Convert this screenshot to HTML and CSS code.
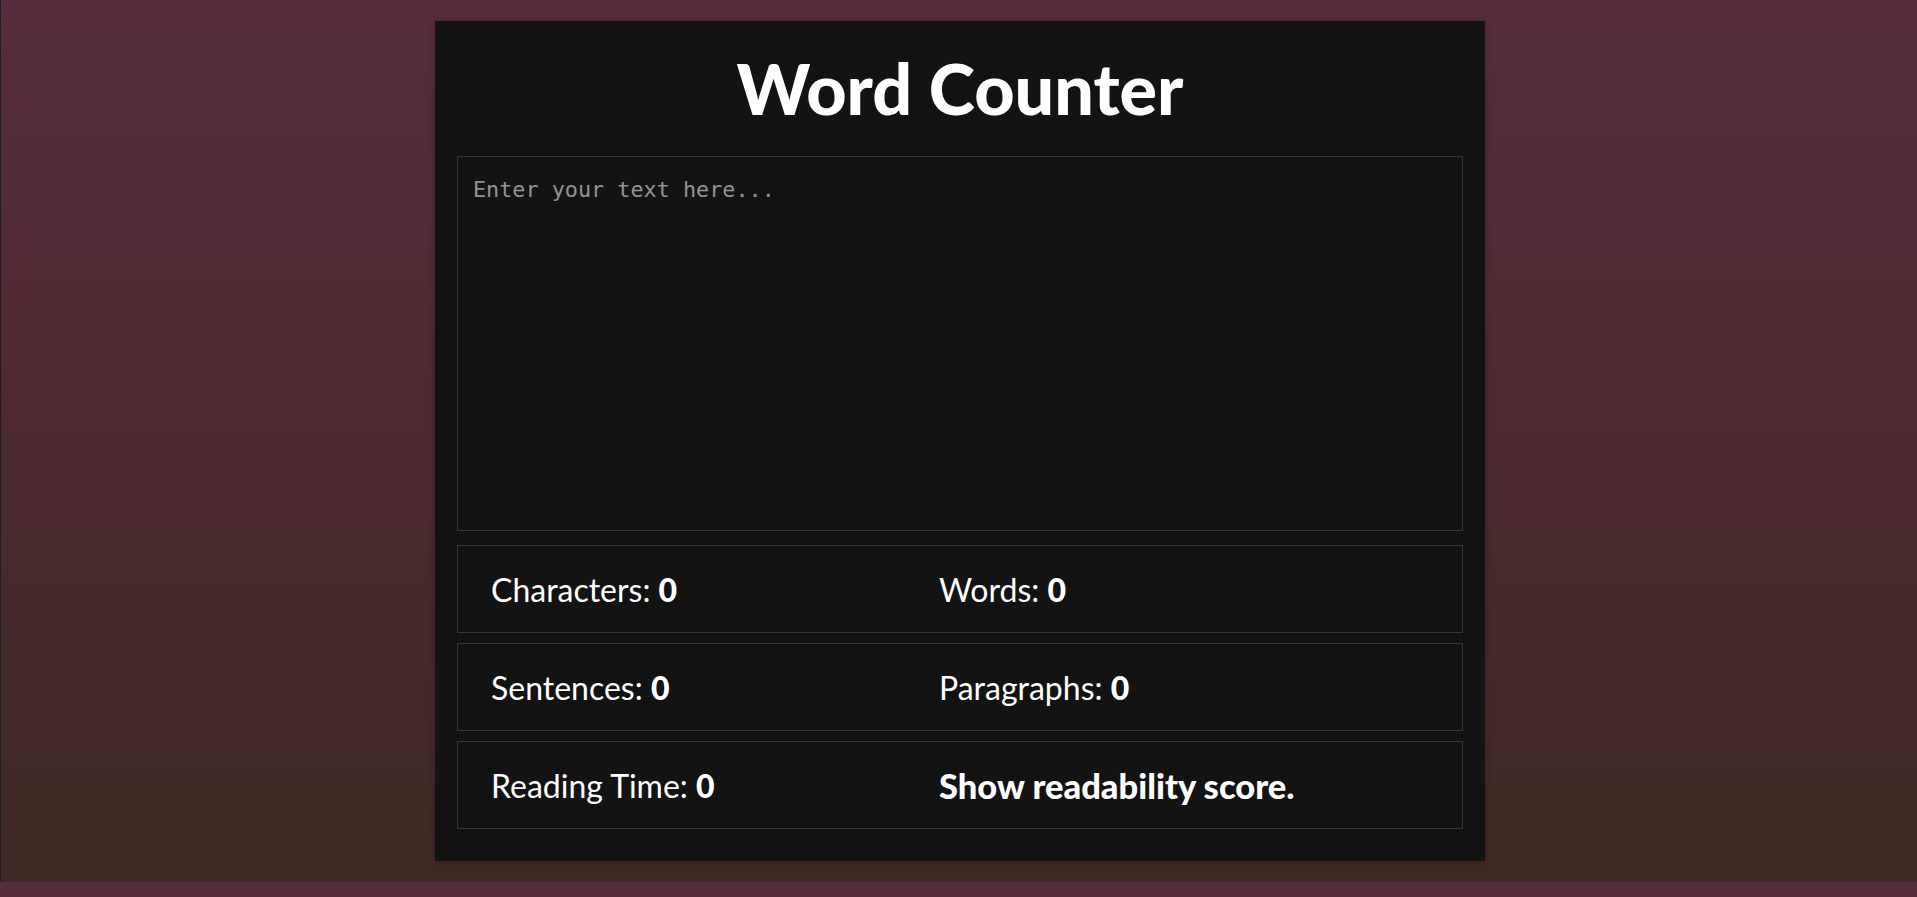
FILE: index.html
```html
<!DOCTYPE html>
<html lang="en">
<head>
<meta charset="utf-8">
<title>Word Counter</title>
<link rel="stylesheet" href="styles.css">
</head>
<body>
  <main class="card">
    <h1 class="title">Word Counter</h1>
    <textarea class="input" placeholder="Enter your text here..."></textarea>
    <div class="stats">
      <div class="row">
        <div class="stat">Characters: <b>0</b></div>
        <div class="stat">Words: <b>0</b></div>
      </div>
      <div class="row">
        <div class="stat">Sentences: <b>0</b></div>
        <div class="stat">Paragraphs: <b>0</b></div>
      </div>
      <div class="row">
        <div class="stat">Reading Time: <b>0</b></div>
        <div class="stat link">Show readability score.</div>
      </div>
    </div>
  </main>
</body>
</html>
```
FILE: styles.css
```css
html {
  border-left: 1px solid #1b1d2b;
}
body {
  margin: 0;
  padding: 21px 0 21px 2px;
  background: linear-gradient(to bottom, #582c3c 0%, #3f2823 100%);
  font-family: Lato, "Liberation Sans", sans-serif;
  color: #fff;
}
.card {
  width: 1050px;
  box-sizing: border-box;
  margin: 0 auto;
  background: #131313;
  padding: 0 22px 32px 22px;
  box-shadow: 0 0 6px rgba(0,0,0,0.25);
}
.title {
  margin: 0 0 33px 0;
  padding-top: 32px;
  font-size: 70px;
  line-height: 70px;
  font-weight: 900;
  text-align: center;
}
.input {
  display: block;
  width: 100%;
  height: 375px;
  box-sizing: border-box;
  margin: 0;
  padding: 16px 16px 16px 15px;
  border: 1px solid #363636;
  background: #131313;
  color: #ddd;
  font-family: "DejaVu Sans Mono", monospace;
  font-size: 21.8px;
  line-height: 1.58;
  resize: none;
  outline: none;
}
.input::placeholder {
  color: #939393;
}
.stats {
  margin-top: 14px;
  display: flex;
  flex-direction: column;
  gap: 10px;
}
.row {
  height: 88px;
  box-sizing: border-box;
  border: 1px solid #363636;
  display: grid;
  grid-template-columns: 448px 1fr;
  align-items: center;
  padding-left: 33px;
  font-size: 32px;
}
.stat b {
  font-weight: 900;
}
.link {
  font-size: 34.5px;
  font-weight: 900;
}
```
